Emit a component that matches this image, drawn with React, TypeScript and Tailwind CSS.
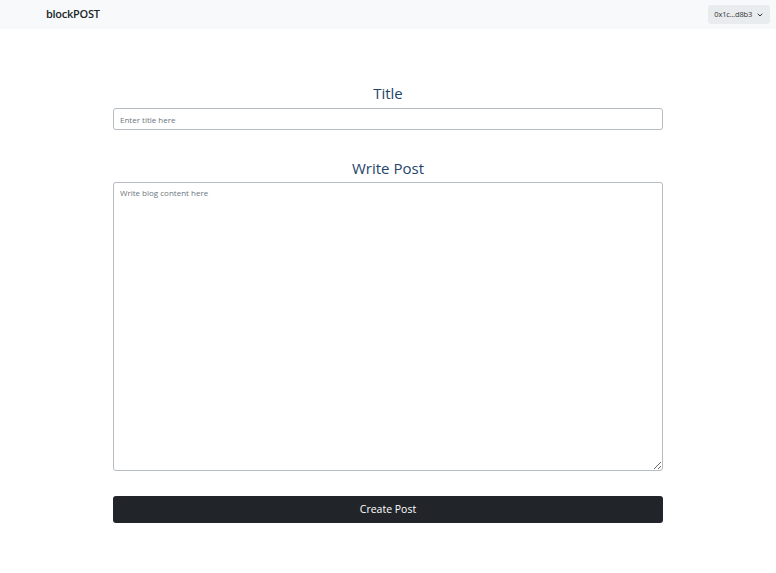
import { ChevronDown } from "lucide-react";

export default function App() {
  return (
    <div className="min-h-[573px] bg-white font-['Open_Sans',sans-serif] text-[#212529]">
      <nav className="flex h-[29px] items-center justify-between bg-[#f8f9fa] pl-[46px] pr-[6px]">
        <span className="text-[11px] font-semibold tracking-tight text-[#212529]">blockPOST</span>
        <button className="flex h-[19px] items-center gap-[4px] rounded-[3px] bg-[#e9ecef] px-[6px] text-[7.5px] tracking-tight text-[#333]">
          0x1c...d8b3
          <ChevronDown className="size-[8px]" strokeWidth={3} />
        </button>
      </nav>

      <main className="mx-auto w-[550px] pt-[54px]">
        <h2 className="text-center text-[15px] leading-[20px] text-[#24456b]">Title</h2>
        <input
          className="mt-[5px] block h-[22px] w-full rounded-[3px] border border-[#b7bcc1] px-[6px] text-[8px] placeholder:text-[#6c757d] focus:outline-none"
          placeholder="Enter title here"
        />

        <h2 className="mt-[28px] text-center text-[15px] leading-[20px] text-[#24456b]">Write Post</h2>
        <textarea
          className="mt-[4px] block h-[289px] w-full rounded-[3px] border border-[#b7bcc1] px-[6px] py-[4px] text-[8px] placeholder:text-[#6c757d] focus:outline-none"
          placeholder="Write blog content here"
        />

        <button className="mt-[25px] block h-[27px] w-full rounded-[3px] bg-[#212529] text-[10.5px] text-white">
          Create Post
        </button>
      </main>
    </div>
  );
}
